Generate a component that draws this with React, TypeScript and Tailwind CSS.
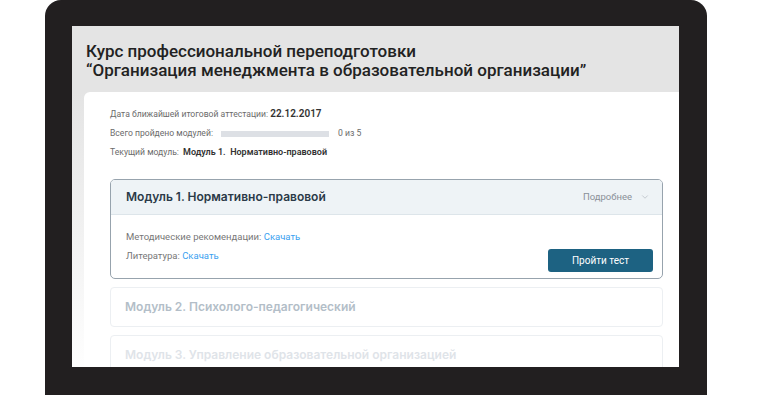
import { ChevronDown } from 'lucide-react';

const info = "font-['Roboto',sans-serif] text-[8.6px] leading-[19px] text-[#6b6b6b]";

function ModuleCard({ title, tone }: { title: string; tone: 'mid' | 'light' }) {
  return (
    <div className="mt-[8px] h-[40px] rounded-[4px] border border-[#eceff2] bg-white px-[14px]">
      <div
        className={
          tone === 'mid'
            ? 'text-[12px] font-semibold leading-[38px] text-[#b3bec8]'
            : 'text-[12px] font-semibold leading-[38px] text-[#dfe4e9]'
        }
      >
        {title}
      </div>
    </div>
  );
}

export default function App() {
  return (
    <div className="h-[396px] w-[768px] overflow-hidden bg-white font-['Inter',sans-serif]">
      <div className="ml-[45px] h-[395px] w-[662px] rounded-t-[16px] bg-[#221f20] px-[27px] pt-[26px]">
        <div className="flex h-[341px] w-[607px] flex-col overflow-hidden bg-[#e4e4e4]">
          {/* Course title */}
          <div className="h-[66px] shrink-0 px-[14px] pt-[16px] font-['Roboto',sans-serif] text-[17px] font-medium leading-[19px] text-[#222]">
            <div>Курс профессиональной переподготовки</div>
            <div>“Организация менеджмента в образовательной организации”</div>
          </div>

          <div className="flex-1 bg-gradient-to-b from-[#e4e4e4] to-white pl-[12px]">
            <div className="h-full rounded-tl-[6px] bg-white pl-[26px] pt-[12px]">
              {/* Summary */}
              <div className={info}>
                Дата ближайшей итоговой аттестации:{' '}
                <span className="text-[10px] font-semibold text-[#333]">22.12.2017</span>
              </div>
              <div className={`${info} flex items-center`}>
                <span>Всего пройдено модулей:</span>
                <span className="ml-[8px] h-[6px] w-[108px] bg-[#dde0e5]" />
                <span className="ml-[9px]">0 из 5</span>
              </div>
              <div className={info}>
                Текущий модуль:{' '}
                <span className="ml-[2px] text-[9px] font-semibold text-[#333]">Модуль 1.&nbsp; Нормативно-правовой</span>
              </div>

              {/* Module 1 */}
              <div className="mt-[17px] w-[553px] overflow-hidden rounded-[5px] border border-[#97a3ad]">
                <div className="flex h-[35px] items-center justify-between border-b border-[#dde5ea] bg-[#eef3f6] pl-[15px] pr-[12px]">
                  <span className="text-[12px] font-semibold text-[#2b3a48]">Модуль 1. Нормативно-правовой</span>
                  <span className="flex items-center gap-[8px] font-['Roboto',sans-serif] text-[9.5px] text-[#8a9098]">
                    Подробнее
                    <ChevronDown size={10} strokeWidth={1.5} className="text-[#aab1b8]" />
                  </span>
                </div>
                <div className="flex h-[63px] justify-between pl-[15px] pr-[9px]">
                  <div className="pt-[12px] font-['Roboto',sans-serif] text-[9.5px] leading-[19px] text-[#777]">
                    <div>
                      Методические рекомендации: <span className="text-[#3a9ff0]">Скачать</span>
                    </div>
                    <div>
                      Литература: <span className="text-[#3a9ff0]">Скачать</span>
                    </div>
                  </div>
                  <button className="mb-[6px] h-[23px] w-[105px] self-end rounded-[3px] bg-[#1d6282] font-['Roboto',sans-serif] text-[10px] text-white">
                    Пройти тест
                  </button>
                </div>
              </div>

              <div className="w-[553px]">
                <ModuleCard title="Модуль 2. Психолого-педагогический" tone="mid" />
                <ModuleCard title="Модуль 3. Управление образовательной организацией" tone="light" />
              </div>
            </div>
          </div>
        </div>
      </div>
    </div>
  );
}
